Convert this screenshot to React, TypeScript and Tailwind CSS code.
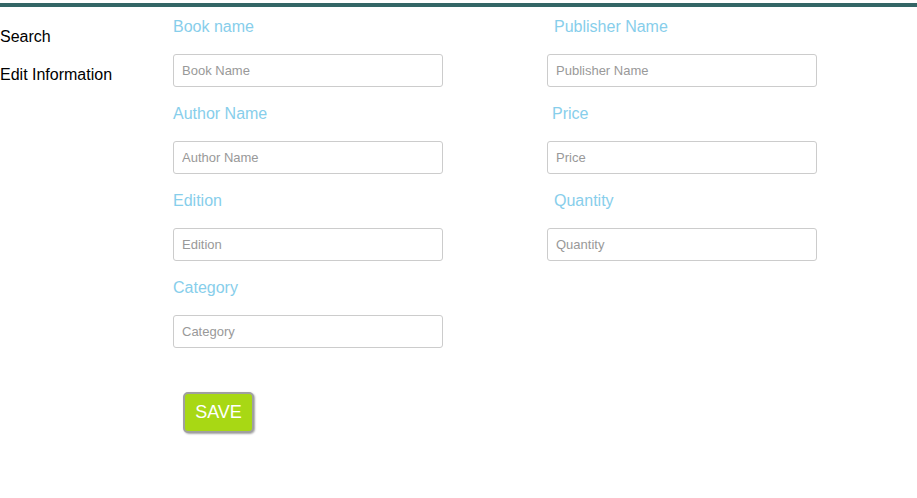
import React from 'react';

const fields = [
  { label: 'Book name', placeholder: 'Book Name', pad: 'pl-0' },
  { label: 'Publisher Name', placeholder: 'Publisher Name', pad: 'pl-[7px]' },
  { label: 'Author Name', placeholder: 'Author Name', pad: 'pl-0' },
  { label: 'Price', placeholder: 'Price', pad: 'pl-[5px]' },
  { label: 'Edition', placeholder: 'Edition', pad: 'pl-0' },
  { label: 'Quantity', placeholder: 'Quantity', pad: 'pl-[7px]' },
  { label: 'Category', placeholder: 'Category', pad: 'pl-0' },
];

const App: React.FC = () => {
  return (
    <div className="min-h-screen bg-white pt-[3px] font-['Liberation_Sans',Arial,sans-serif]">
      {/* Top bar */}
      <div className="h-[4px] bg-[#336666]"></div>

      <div className="flex">
        {/* Sidebar */}
        <div className="w-[173px] pt-[20px] flex flex-col gap-[18px] text-[16px] leading-[20px] text-black">
          <div>Search</div>
          <div>Edit Information</div>
        </div>

        {/* Form */}
        <div className="pt-[10px]">
          <div className="grid grid-cols-[374px_270px] gap-y-[17px]">
            {fields.map((f) => (
              <div key={f.label} className="flex flex-col">
                <label className={`h-[20px] text-[16px] leading-[20px] text-[#87ceeb] ${f.pad}`}>{f.label}</label>
                <input
                  type="text"
                  placeholder={f.placeholder}
                  className="mt-[17px] w-[270px] h-[33px] border border-[#cccccc] rounded-[3px] px-[8px] text-[13px] text-[#555] placeholder:text-[#999999] outline-none"
                />
              </div>
            ))}
          </div>

          <button className="mt-[44px] ml-[10px] w-[71px] h-[41px] bg-[#a8d814] border-2 border-[#a0a0a0] rounded-[5px] shadow-[1px_1px_2px_rgba(0,0,0,0.35)] text-white text-[18px] leading-none pb-[1px]">
            SAVE
          </button>
        </div>
      </div>
    </div>
  );
};

export default App;
